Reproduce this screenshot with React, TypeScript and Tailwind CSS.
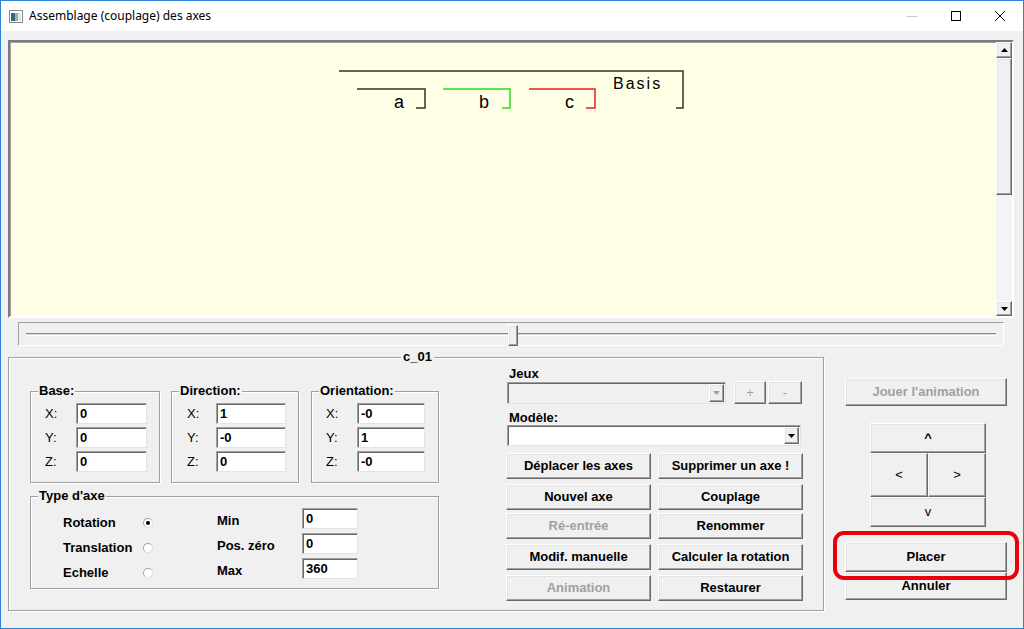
import { ReactNode } from "react";
import clsx from "clsx";

const raised =
	"bg-[#f0f0f0] border border-t-white border-l-white border-r-[#696969] border-b-[#696969] shadow-[inset_-1px_-1px_0_#a0a0a0,inset_1px_1px_0_#e3e3e3]";
const sunken =
	"border border-t-[#a0a0a0] border-l-[#a0a0a0] border-r-[#e3e3e3] border-b-[#e3e3e3] shadow-[inset_1px_1px_0_#696969]";

const Btn = ({
	children,
	disabled,
	className,
}: {
	children: ReactNode;
	disabled?: boolean;
	className?: string;
}) => (
	<div
		className={clsx(
			raised,
			"flex items-center justify-center text-[13px] font-bold",
			disabled ? "text-[#a0a0a0]" : "text-black",
			className
		)}
	>
		{children}
	</div>
);

const Field = ({ value, className }: { value: string; className?: string }) => (
	<div
		className={clsx(
			sunken,
			"bg-white h-[21px] pl-[3px] text-[13px] font-bold leading-[19px] text-black",
			className
		)}
	>
		{value}
	</div>
);

const Group = ({
	title,
	className,
	children,
}: {
	title: string;
	className?: string;
	children: ReactNode;
}) => (
	<div
		className={clsx(
			"relative border border-[#a0a0a0] shadow-[inset_1px_1px_0_#fff,1px_1px_0_#fff]",
			className
		)}
	>
		<span className="absolute -top-[9px] left-[7px] bg-[#f0f0f0] px-[1px] text-[13px] font-bold leading-[15px]">
			{title}
		</span>
		{children}
	</div>
);

const Vector = ({
	title,
	values,
	width,
	pad,
	labelW,
	inputW,
}: {
	title: string;
	values: string[];
	width: string;
	pad: string;
	labelW: string;
	inputW: string;
}) => (
	<Group title={title} className={clsx(width, "h-[92px] pt-[11px]")}>
		<div className="flex flex-col gap-[3px]">
			{["X:", "Y:", "Z:"].map((axis, i) => (
				<div key={axis} className={clsx("flex items-center", pad)}>
					<span className={clsx(labelW, "text-[13px]")}>{axis}</span>
					<Field value={values[i]} className={inputW} />
				</div>
			))}
		</div>
	</Group>
);

const Radio = ({ checked }: { checked?: boolean }) => (
	<span className="flex h-[10px] w-[10px] items-center justify-center rounded-full border border-t-[#a0a0a0] border-l-[#a0a0a0] border-r-[#dcdcdc] border-b-[#dcdcdc] bg-white">
		{checked && <span className="h-[4px] w-[4px] rounded-full bg-black" />}
	</span>
);

const Combo = ({ disabled, className }: { disabled?: boolean; className?: string }) => (
	<div
		className={clsx(
			sunken,
			"flex items-stretch justify-end p-[1px]",
			disabled ? "bg-[#f0f0f0]" : "bg-white",
			className
		)}
	>
		<div className={clsx(raised, "flex w-[15px] items-center justify-center")}>
			<svg width="7" height="4" viewBox="0 0 7 4">
				<path d="M0 0h7L3.5 4z" fill={disabled ? "#a0a0a0" : "#000"} />
			</svg>
		</div>
	</div>
);

const App = () => {
	const types = [
		{ label: "Rotation", checked: true, field: "Min", value: "0" },
		{ label: "Translation", checked: false, field: "Pos. zéro", value: "0" },
		{ label: "Echelle", checked: false, field: "Max", value: "360" },
	];

	return (
		<div className="flex h-[629px] w-[1024px] flex-col overflow-hidden border border-[#2b82d4] bg-[#f0f0f0] font-['Liberation_Sans',sans-serif] text-black">
			{/* title bar */}
			<div className="flex h-[30px] items-center bg-white">
				<svg width="14" height="13" viewBox="0 0 14 13" className="ml-[8px]">
					<rect x="0.5" y="0.5" width="13" height="12" fill="#fff" stroke="#8a8a8a" />
					<rect x="2" y="3" width="4" height="8" fill="#2f6f73" />
					<rect x="6" y="3" width="3" height="8" fill="#8fb7b3" />
					<rect x="9" y="3" width="3" height="8" fill="#dfe8e8" />
				</svg>
				<span className="ml-[6px] font-['Noto_Sans',sans-serif] text-[12px]">
					Assemblage (couplage) des axes
				</span>
				<div className="ml-auto flex h-full">
					<div className="flex w-[46px] items-center justify-center">
						<span className="h-[1px] w-[10px] bg-[#c8c8c8]" />
					</div>
					<div className="flex w-[42px] items-center justify-center">
						<span className="h-[10px] w-[10px] border border-black" />
					</div>
					<div className="flex w-[46px] items-center justify-center">
						<svg width="10" height="10" viewBox="0 0 10 10">
							<path d="M0 0L10 10M10 0L0 10" stroke="#000" strokeWidth="1" />
						</svg>
					</div>
				</div>
			</div>

			{/* body */}
			<div className="flex flex-1 flex-col pl-[7px] pt-[9px]">
				{/* canvas */}
				<div className="flex h-[278px] w-[1006px] border-2 border-t-[#7a7a7a] border-l-[#7a7a7a] border-r-white border-b-white bg-[#ffffe6] shadow-[inset_1px_1px_0_#a0a0a0]">
					<div className="flex-1">
						<svg width="986" height="274" viewBox="10 42 986 274">
							<g fill="none" strokeWidth="1.5">
								<path d="M339 71H683V108H676" stroke="#333" />
								<path d="M357 89H425V108H416" stroke="#333" />
								<path d="M443 89H510V108H502" stroke="#22e022" />
								<path d="M529 89H595V108H586" stroke="#ee1c1c" />
							</g>
							<g fontFamily="Liberation Sans, sans-serif" fontSize="18" fill="#000">
								<text x="394" y="108">a</text>
								<text x="479" y="108">b</text>
								<text x="565" y="108">c</text>
								<text x="613" y="89" fontSize="16" letterSpacing="2">
									Basis
								</text>
							</g>
						</svg>
					</div>
					<div className="flex w-[16px] flex-col bg-[#f4f4f4]">
						<div className={clsx(raised, "flex h-[16px] items-center justify-center")}>
							<svg width="7" height="4" viewBox="0 0 7 4">
								<path d="M0 4h7L3.5 0z" fill="#000" />
							</svg>
						</div>
						<div className={clsx(raised, "h-[137px]")} />
						<div className="flex-1" />
						<div className={clsx(raised, "flex h-[15px] items-center justify-center")}>
							<svg width="7" height="4" viewBox="0 0 7 4">
								<path d="M0 0h7L3.5 4z" fill="#000" />
							</svg>
						</div>
					</div>
				</div>

				{/* slider */}
				<div className="relative ml-[10px] mt-[4px] flex h-[24px] w-[986px] items-center border border-t-[#a0a0a0] border-l-[#a0a0a0] border-r-white border-b-white px-[7px]">
					<div className="h-[3px] w-full border-t border-t-[#8a8a8a] border-b border-b-white bg-[#d8d8d8]" />
					<div className={clsx(raised, "absolute left-[489px] top-[2px] h-[21px] w-[10px]")} />
				</div>

				{/* bottom */}
				<div className="mt-[11px] flex">
					<Group title="" className="h-[254px] w-[816px]">
						<span className="absolute -top-[9px] left-[392px] bg-[#f0f0f0] px-[2px] text-[13px] font-bold leading-[15px]">
							c_01
						</span>
						<div className="flex">
							{/* left column */}
							<div className="ml-[21px] mt-[33px] flex w-[409px] flex-col gap-[13px]">
								<div className="flex gap-[11px]">
									<Vector
										title="Base:"
										values={["0", "0", "0"]}
										width="w-[130px]"
										pad="pl-[14px]"
										labelW="w-[31px]"
										inputW="w-[71px]"
									/>
									<div className="flex gap-[12px]">
										<Vector
											title="Direction:"
											values={["1", "-0", "0"]}
											width="w-[128px]"
											pad="pl-[15px]"
											labelW="w-[29px]"
											inputW="w-[70px]"
										/>
										<Vector
											title="Orientation:"
											values={["-0", "1", "-0"]}
											width="w-[128px]"
											pad="pl-[14px]"
											labelW="w-[31px]"
											inputW="w-[68px]"
										/>
									</div>
								</div>
								<Group title="Type d'axe" className="h-[93px] w-[409px] pt-[11px]">
									<div className="flex flex-col gap-[4px]">
										{types.map((t) => (
											<div key={t.label} className="flex h-[21px] items-center pl-[32px] text-[13px] font-bold">
												<span className="w-[80px] translate-y-[4px]">{t.label}</span>
												<span className="translate-y-[4px]">
													<Radio checked={t.checked} />
												</span>
												<span className="ml-[64px] w-[85px] translate-y-[2px]">{t.field}</span>
												<Field value={t.value} className="w-[56px]" />
											</div>
										))}
									</div>
								</Group>
							</div>

							{/* right column */}
							<div className="ml-[67px] flex w-[298px] flex-col pt-[8px] text-[13px] font-bold">
								<span className="ml-[3px] leading-[15px]">Jeux</span>
								<div className="flex items-end">
									<Combo disabled className="ml-[1px] h-[22px] w-[219px]" />
									<Btn disabled className="ml-[8px] h-[23px] w-[32px] font-normal">
										+
									</Btn>
									<Btn disabled className="ml-[2px] h-[23px] w-[34px] font-normal">
										-
									</Btn>
								</div>
								<span className="ml-[3px] mt-[7px] leading-[14px]">Modèle:</span>
								<Combo className="ml-[1px] h-[21px] w-[294px]" />
								<div className="mt-[7px] grid grid-cols-[145px_145px] gap-x-[7px]">
									<Btn className="h-[26px]">Déplacer les axes</Btn>
									<Btn className="h-[26px]">Supprimer un axe !</Btn>
								</div>
								<div className="mt-[5px] grid grid-cols-[145px_145px] gap-x-[7px]">
									<Btn className="h-[26px]">Nouvel axe</Btn>
									<Btn className="h-[26px]">Couplage</Btn>
								</div>
								<div className="mt-[3px] grid grid-cols-[145px_145px] gap-x-[7px]">
									<Btn disabled className="h-[26px]">
										Ré-entrée
									</Btn>
									<Btn className="h-[26px]">Renommer</Btn>
								</div>
								<div className="mt-[5px] grid grid-cols-[145px_145px] gap-x-[7px]">
									<Btn className="h-[26px]">Modif. manuelle</Btn>
									<Btn className="h-[26px]">Calculer la rotation</Btn>
								</div>
								<div className="mt-[5px] grid grid-cols-[145px_145px] gap-x-[7px]">
									<Btn disabled className="h-[26px]">
										Animation
									</Btn>
									<Btn className="h-[26px]">Restaurer</Btn>
								</div>
							</div>
						</div>
					</Group>

					{/* right panel */}
					<div className="relative flex flex-1 flex-col">
						<Btn disabled className="ml-[21px] mt-[21px] h-[28px] w-[162px]">
							Jouer l'animation
						</Btn>
						<div className="ml-[46px] mt-[17px] flex w-[116px] flex-col">
							<Btn className="h-[30px] text-[11px]">^</Btn>
							<div className="flex">
								<Btn className="h-[44px] w-[58px] font-normal">&lt;</Btn>
								<Btn className="h-[44px] flex-1 font-normal">&gt;</Btn>
							</div>
							<Btn className="h-[30px] font-normal">v</Btn>
						</div>
						<Btn className="ml-[21px] mt-[15px] h-[30px] w-[162px]">Placer</Btn>
						<Btn className="ml-[21px] h-[28px] w-[162px]">Annuler</Btn>
						<div className="absolute left-[9px] top-[174px] h-[49px] w-[186px] rounded-[11px] border-[4px] border-[#e8000b]" />
					</div>
				</div>
			</div>
		</div>
	);
};

export default App;
